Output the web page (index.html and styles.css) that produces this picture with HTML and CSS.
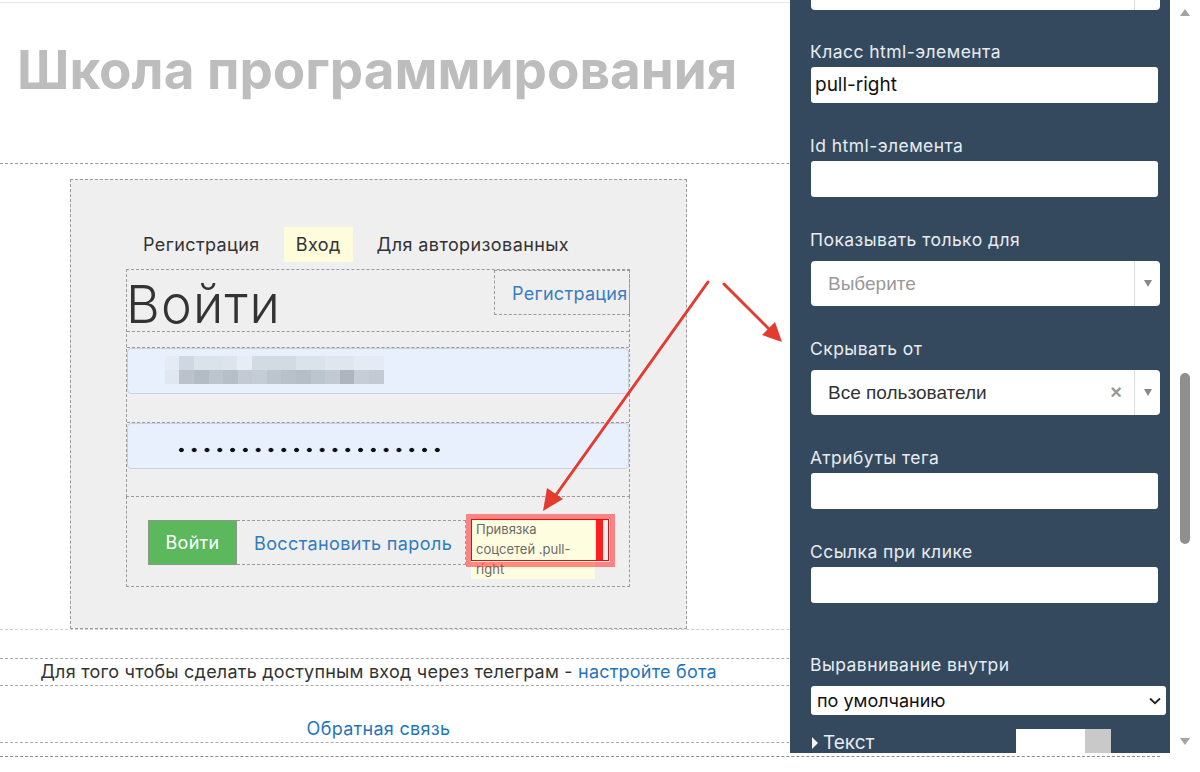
FILE: index.html
```html
<!DOCTYPE html>
<html lang="ru">
<head>
<meta charset="utf-8">
<title>Школа программирования</title>
<link rel="stylesheet" href="styles.css">
</head>
<body>
<div class="page">
  <div class="topline"></div>
  <header class="hero"><h1 class="title">Школа программирования</h1></header>

  <section class="band band-login">
    <div class="container">
      <div class="login-block">
        <nav class="menu">
          <span class="menu-item">Регистрация</span>
          <span class="menu-item active">Вход</span>
          <span class="menu-item">Для авторизованных</span>
        </nav>
        <div class="form-box">
          <div class="form-head">
            <h2 class="form-title">Войти</h2>
            <a class="reg-link">Регистрация</a>
          </div>
          <div class="field">
            <div class="input">
              <div class="blur"><div class="blur-row blur-row1"></div><div class="blur-row blur-row2"></div></div>
            </div>
          </div>
          <div class="field field-second">
            <div class="input"><div class="dots"></div></div>
          </div>
        </div>
        <div class="actions">
          <button class="btn-login" type="button">Войти</button>
          <a class="restore">Восстановить пароль</a>
          <div class="social">Привязка соцсетей .pull-right<span class="hl"></span></div>
        </div>
      </div>
    </div>
  </section>

  <section class="band band-tg">
    <div class="container tg-text">Для того чтобы сделать доступным вход через телеграм - <a class="link">настройте бота</a></div>
  </section>
  <section class="band band-fb">
    <div class="container fb-text"><a class="link">Обратная связь</a></div>
  </section>
  <div class="page-end"></div>
</div>

<aside class="panel">
  <div class="s2 s2-top"><span class="s2-text"></span><span class="s2-sep"></span><span class="s2-arrow"></span></div>

  <div class="group group-first">
    <div class="plabel">Класс html-элемента</div>
    <div class="pinput">pull-right</div>
  </div>
  <div class="group">
    <div class="plabel">Id html-элемента</div>
    <div class="pinput"></div>
  </div>
  <div class="group">
    <div class="plabel">Показывать только для</div>
    <div class="s2"><span class="s2-text s2-placeholder">Выберите</span><span class="s2-sep"></span><span class="s2-arrow"><i class="tri"></i></span></div>
  </div>
  <div class="group">
    <div class="plabel">Скрывать от</div>
    <div class="s2"><span class="s2-text">Все пользователи</span><span class="s2-clear">×</span><span class="s2-sep"></span><span class="s2-arrow"><i class="tri"></i></span></div>
  </div>
  <div class="group">
    <div class="plabel">Атрибуты тега</div>
    <div class="pinput"></div>
  </div>
  <div class="group">
    <div class="plabel">Ссылка при клике</div>
    <div class="pinput"></div>
  </div>
  <div class="group group-wide">
    <div class="plabel">Выравнивание внутри</div>
    <div class="pselect"><span class="pselect-text">по умолчанию</span>
      <svg class="chev" width="12" height="8" viewBox="0 0 12 8"><path d="M1 1.5 L6 6.2 L11 1.5" fill="none" stroke="#222" stroke-width="1.8"/></svg>
    </div>
  </div>
  <div class="ptext-row">
    <div class="ptext"><i class="rtri"></i>Текст</div>
    <div class="swatch"><span class="swatch-white"></span><span class="swatch-gray"></span></div>
  </div>
</aside>

<div class="scrollbar">
  <i class="sb-up"></i>
  <div class="sb-track"><div class="sb-thumb"></div></div>
  <i class="sb-down"></i>
</div>

<svg class="arrows" width="1200" height="772" viewBox="0 0 1200 772">
  <g stroke="#e53a2f" stroke-width="3" fill="#e53a2f" stroke-linecap="round">
    <line x1="708" y1="282" x2="553" y2="499"/>
    <polygon points="543,511 547,488 563,499" stroke="none"/>
    <line x1="724" y1="284" x2="772" y2="332"/>
    <polygon points="782,342 762,335 775,322" stroke="none"/>
  </g>
</svg>
</body>
</html>
```

FILE: styles.css
```css
html, body {
  margin: 0;
  padding: 0;
}
body {
  width: 1200px;
  height: 772px;
  overflow: hidden;
  background: #fff;
  font-family: Inter, "Noto Sans", "Liberation Sans", sans-serif;
  color: #333;
}
.page {
  width: 1160px;
}
.topline {
  height: 1px;
  margin-top: 2px;
  width: 790px;
  background: #e6e6e6;
}
.hero {
  height: 161px;
  box-sizing: border-box;
  border-bottom: 1px dashed #9a9a9a;
  padding: 34px 0 0 17px;
}
.title {
  margin: 0;
  font-size: 53px;
  font-weight: 700;
  line-height: 66px;
  color: #bdbdbd;
  white-space: nowrap;
}
.container {
  width: 757px;
}
.band-login {
  padding-top: 15px;
  border-bottom: 1px dashed #cfcfcf;
}
.login-block {
  width: 617px;
  margin: 0 auto;
  box-sizing: border-box;
  background: #efefef;
  border: 1px dashed #9a9a9a;
  padding: 47px 56px 41px 55px;
}
.menu {
  display: flex;
  gap: 12px;
  margin-left: 5px;
  height: 35px;
}
.menu-item {
  padding: 0 12px;
  line-height: 36px;
  font-size: 18px;
  letter-spacing: 0.4px;
  color: #333;
}
.menu-item.active {
  background: #fffcdb;
}
.form-box {
  margin-top: 7px;
  border: 1px dashed #9a9a9a;
}
.form-head {
  height: 61px;
  border-bottom: 1px dashed #9a9a9a;
  display: flex;
  justify-content: space-between;
  align-items: flex-start;
}
.form-title {
  margin: 7px 0 0 -1px;
  font-size: 52px;
  font-weight: 300;
  line-height: 56px;
  letter-spacing: 1.2px;
  color: #333;
}
.reg-link {
  height: 45px;
  width: 136px;
  margin-right: -1px;
  box-sizing: border-box;
  border: 1px dashed #9a9a9a;
  padding-left: 17px;
  line-height: 45px;
  font-size: 18px;
  letter-spacing: 0.3px;
  color: #3a7dc0;
  white-space: nowrap;
}
.field {
  margin-top: 15px;
  border-top: 1px dashed #9a9a9a;
  padding-bottom: 28px;
}
.field-second {
  margin-top: 0;
  padding-bottom: 27px;
}
.input {
  height: 46px;
  box-sizing: border-box;
  background: #e8f0fd;
  border: 1px solid #c9d3de;
  border-radius: 4px;
  overflow: hidden;
}
.blur {
  margin: 7px 0 0 37px;
  width: 219px;
}
.blur-row {
  height: 14px;
}
.blur-row1 {
  background: linear-gradient(to right,
    #e4ebf4 0 14px, #cfd8e2 14px 29px, #dae2eb 29px 58px, #dde4ee 58px 72px,
    #e6edf7 72px 87px, #d2dae3 87px 131px, #dae2eb 131px 160px, #dfe6ef 160px 189px,
    #e4ebf4 189px 219px);
}
.blur-row2 {
  background: linear-gradient(to right,
    #e0e7f0 0 14px, #bac3cc 14px 29px, #b3bbc5 29px 44px, #bcc4ce 44px 58px,
    #b6bec8 58px 73px, #c3cad3 73px 87px, #c4ccd5 87px 102px, #bcc4cd 102px 116px,
    #b8c0ca 116px 131px, #b5bdc7 131px 146px, #bcc4ce 146px 160px, #c2c9d2 160px 175px,
    #adb5bf 175px 189px, #c6cdd6 189px 204px, #c3cad3 204px 219px);
}
.dots {
  margin: 23px 0 0 47px;
  width: 269px;
  height: 6px;
  background: radial-gradient(circle at center, #111 2px, rgba(0,0,0,0) 2.6px) 0 0 / 12.8px 6px repeat-x;
}
.actions {
  margin-top: -1px;
  height: 91px;
  box-sizing: border-box;
  border: 1px dashed #9a9a9a;
  padding: 23px 21px 0;
  display: flex;
  align-items: flex-start;
}
.btn-login {
  width: 89px;
  height: 45px;
  flex: none;
  background: #5cb85c;
  color: #fff;
  border: 1px solid #8a9a8a;
  font-family: inherit;
  font-size: 18px;
  letter-spacing: 0.3px;
  padding: 0;
}
.restore {
  height: 45px;
  width: 229px;
  flex: none;
  box-sizing: border-box;
  border: 1px dashed #9a9a9a;
  border-left: none;
  padding-left: 17px;
  line-height: 45px;
  color: #2f7cc1;
  font-size: 18px;
  letter-spacing: 0.4px;
  white-space: nowrap;
}
.social {
  position: relative;
  flex: none;
  margin-left: 5px;
  margin-top: -1px;
  width: 124px;
  height: 60px;
  box-sizing: border-box;
  padding: 0 5px;
  background: #fffddf;
  font-size: 13px;
  line-height: 20px;
  color: #6b6b6b;
}
.hl {
  position: absolute;
  left: -5px;
  top: -5px;
  width: 149px;
  height: 53px;
  box-sizing: border-box;
  border: 5px solid rgba(255, 45, 45, 0.55);
}
.hl::before {
  content: "";
  position: absolute;
  left: 0;
  top: 0;
  width: 138px;
  height: 42px;
  box-sizing: border-box;
  border: 1px solid #f00;
}
.hl::after {
  content: "";
  position: absolute;
  left: 125px;
  top: 1px;
  width: 7px;
  height: 40px;
  background: #ff1e1e;
}
.band-tg {
  margin-top: 28px;
  border-top: 1px dashed #aaa;
  border-bottom: 1px dashed #aaa;
}
.tg-text {
  text-align: center;
  font-size: 18px;
  line-height: 26px;
  letter-spacing: 0.22px;
  color: #333;
  white-space: nowrap;
}
.link {
  color: #1f75bd;
}
.band-fb {
  padding-top: 30px;
  border-bottom: 1px dashed #aaa;
}
.fb-text {
  text-align: center;
  font-size: 18px;
  line-height: 26px;
  letter-spacing: 0.3px;
}
.page-end {
  margin-top: 13px;
  border-bottom: 1px dashed #8c8c8c;
}

/* right panel */
.panel {
  position: fixed;
  top: 0;
  left: 790px;
  width: 380px;
  height: 753px;
  box-sizing: border-box;
  padding-left: 20px;
  background: #34495e;
  overflow: hidden;
  color: #e8ecf0;
  z-index: 5;
}
.group {
  margin-top: 31px;
}
.group-first {
  margin-top: 30px;
}
.group-wide {
  margin-top: 50px;
}
.plabel {
  font-size: 17.5px;
  line-height: 24px;
  height: 24px;
  white-space: nowrap;
  letter-spacing: 0.45px;
}
.pinput {
  margin: 3px 0 0 1px;
  width: 347px;
  height: 36px;
  box-sizing: border-box;
  background: #fff;
  border-radius: 3px;
  padding-left: 4px;
  font-size: 19px;
  line-height: 36px;
  color: #111;
}
.s2 {
  margin: 9px 0 0 1px;
  width: 349px;
  height: 45px;
  box-sizing: border-box;
  background: #fff;
  border-radius: 4px;
  display: flex;
  align-items: center;
  font-family: "Liberation Sans", Arial, sans-serif;
  font-size: 19px;
  color: #333;
}
.s2-top {
  margin-top: -35px;
}
.s2-text {
  flex: 1;
  padding-left: 17px;
  white-space: nowrap;
}
.s2-placeholder {
  color: #999;
}
.s2-clear {
  margin-right: 12px;
  font-weight: 700;
  font-size: 20px;
  color: #999;
}
.s2-sep {
  align-self: stretch;
  width: 1px;
  background: #dcdcdc;
}
.s2-arrow {
  width: 25px;
  display: flex;
  justify-content: center;
  align-items: center;
}
.tri {
  width: 0;
  height: 0;
  border-left: 4px solid transparent;
  border-right: 4px solid transparent;
  border-top: 7px solid #888;
}
.pselect {
  margin: 9px 0 0 1px;
  width: 355px;
  height: 29px;
  box-sizing: border-box;
  background: #fff;
  border-radius: 3px;
  display: flex;
  align-items: center;
  justify-content: space-between;
  padding: 0 5px 0 6px;
  font-size: 18px;
  color: #111;
}
.chev {
  display: block;
}
.ptext-row {
  display: flex;
  align-items: flex-start;
  margin-top: 14px;
}
.ptext {
  width: 206px;
  margin-top: 3px;
  font-size: 19px;
  line-height: 22px;
  display: flex;
  align-items: center;
}
.rtri {
  width: 0;
  height: 0;
  border-top: 6px solid transparent;
  border-bottom: 6px solid transparent;
  border-left: 6px solid #f2f2f2;
  margin: 0 5px 0 2px;
}
.swatch {
  display: flex;
  height: 24px;
}
.swatch-white {
  width: 69px;
  background: #fff;
}
.swatch-gray {
  width: 26px;
  background: #c9c9c9;
}

/* scrollbar */
.scrollbar {
  position: fixed;
  top: 0;
  right: 0;
  width: 30px;
  height: 753px;
  background: #fff;
  z-index: 5;
  display: flex;
  flex-direction: column;
  align-items: center;
}
.sb-up {
  margin-top: 9px;
  width: 0;
  height: 0;
  border-left: 5px solid transparent;
  border-right: 5px solid transparent;
  border-bottom: 7px solid #a3a3a3;
}
.sb-track {
  flex: 1;
  width: 10px;
  position: relative;
}
.sb-thumb {
  position: absolute;
  left: 0;
  top: 357px;
  width: 10px;
  height: 171px;
  border-radius: 5px;
  background: #8f8f8f;
}
.sb-down {
  margin-bottom: 8px;
  width: 0;
  height: 0;
  border-left: 5px solid transparent;
  border-right: 5px solid transparent;
  border-top: 7px solid #a3a3a3;
}
.arrows {
  position: fixed;
  top: 0;
  left: 0;
  z-index: 10;
  pointer-events: none;
}
```
